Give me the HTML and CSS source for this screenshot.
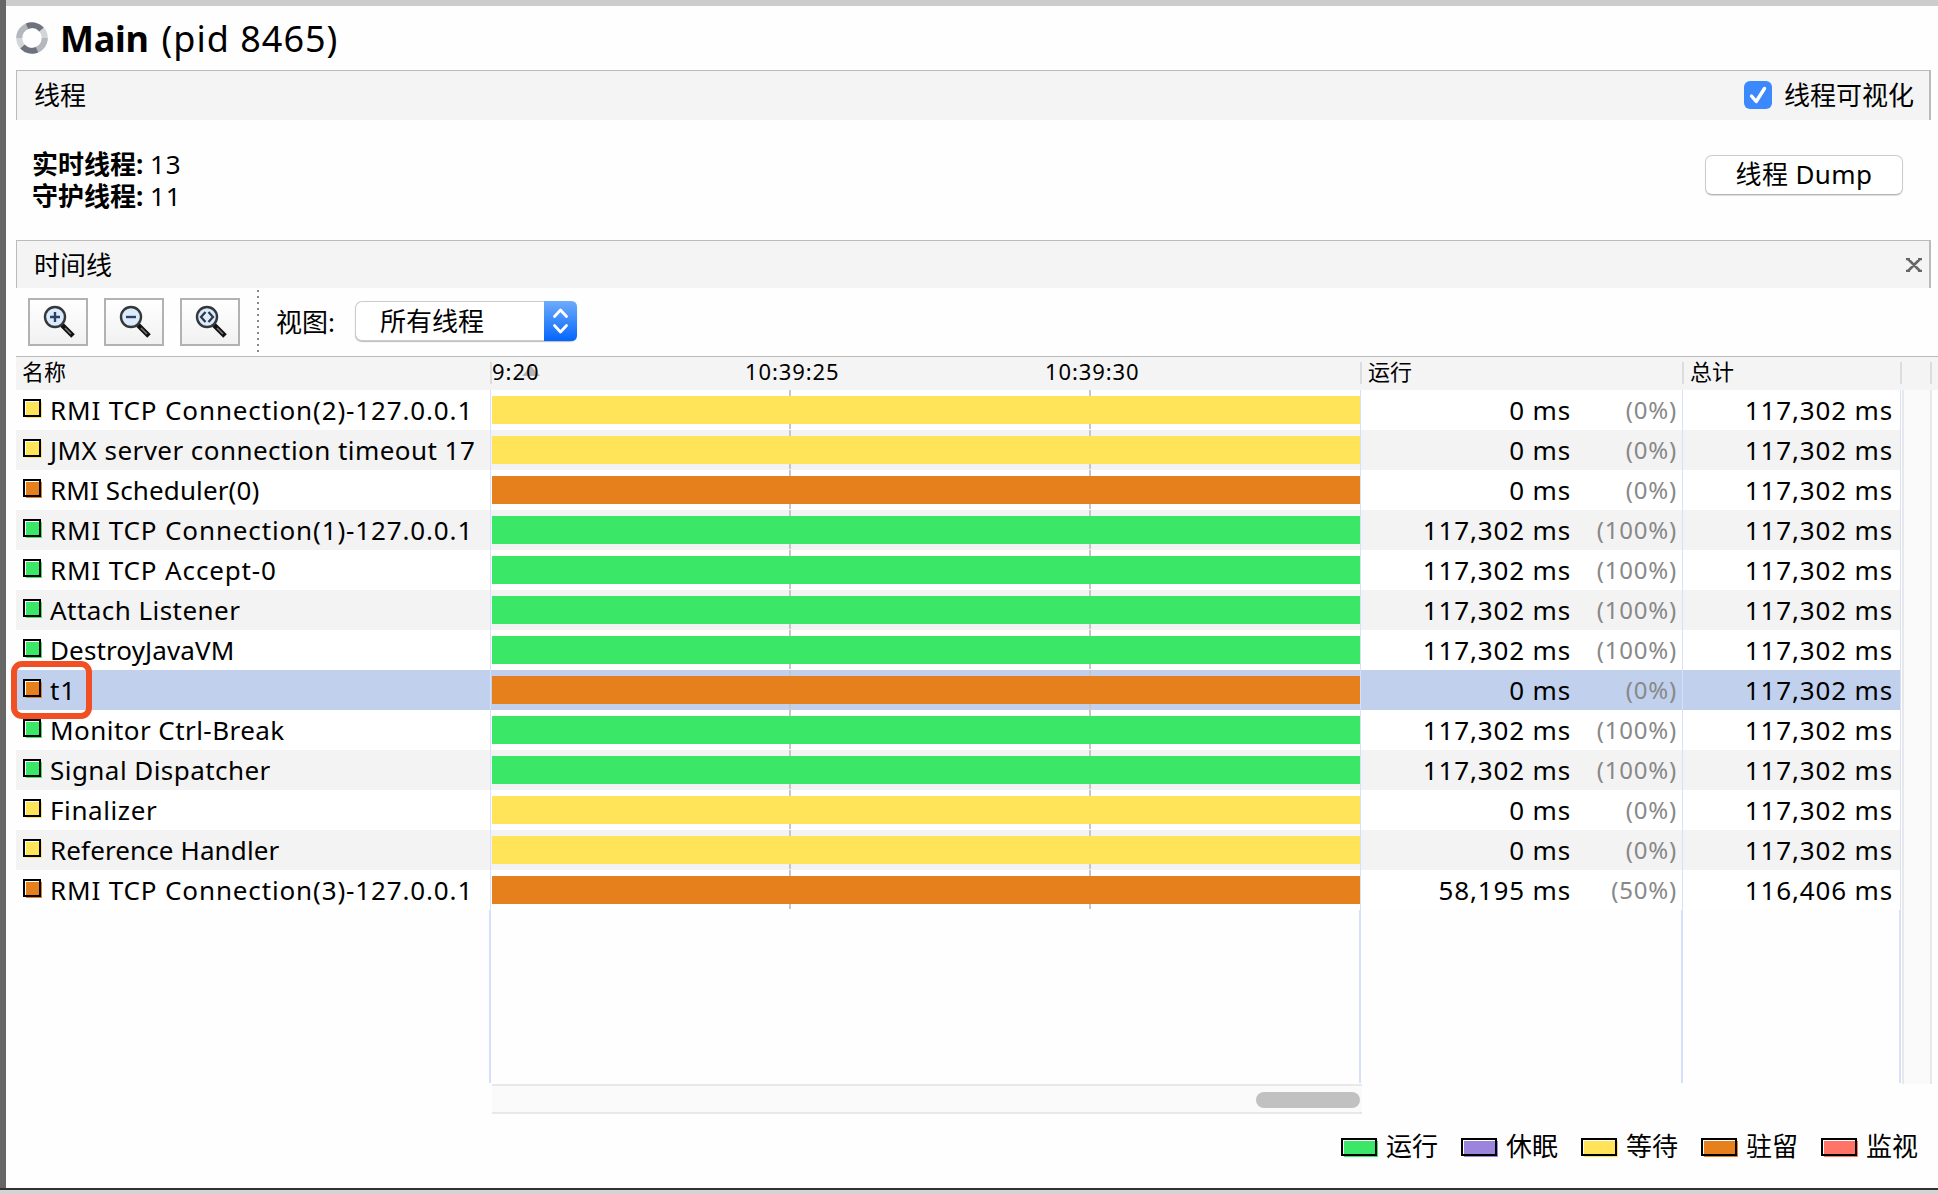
FILE: index.html
```html
<!DOCTYPE html>
<html lang="zh-CN">
<head>
<meta charset="utf-8">
<title>Main (pid 8465)</title>
<link rel="stylesheet" href="styles.css">
</head>
<body>
<div class="window">
  <header class="title">
    <svg class="spinner" width="32" height="32" viewBox="0 0 32 32" fill="none" stroke-width="6">
      <circle cx="16" cy="16" r="12.8" stroke="#d3d5d9"/>
      <path d="M3.200 16A12.800 12.800 0 0 1 12 4" stroke="#b4b7bd"/>
      <path d="M11 4.300A12.800 12.800 0 0 1 25.500 7.500" stroke="#6d727c"/>
      <path d="M28.800 16A12.800 12.800 0 0 1 20 28" stroke="#b4b7bd"/>
      <path d="M21 27.700A12.800 12.800 0 0 1 6.500 24.500" stroke="#6d727c"/>
    </svg>
    <h1><b>Main</b> <span class="pid">(pid 8465)</span></h1>
  </header>

  <section class="bar">
    <span>线程</span>
    <label class="visual">
      <svg width="28" height="28" viewBox="0 0 28 28"><rect width="28" height="28" rx="6" fill="#3b89fc"/><path d="M7.500 15L12.200 20.500L20.500 7.500" fill="none" stroke="#fff" stroke-width="3.400" stroke-linecap="round" stroke-linejoin="round"/></svg>
      <span>线程可视化</span>
    </label>
  </section>

  <section class="summary">
    <div class="stats">
      <div><b>实时线程:</b> <span>13</span></div>
      <div><b>守护线程:</b> <span>11</span></div>
    </div>
    <button class="dump">线程 Dump</button>
  </section>

  <section class="bar timeline">
    <span>时间线</span>
    <svg class="close" width="16" height="14" viewBox="0 0 16 14"><path d="M0 1H4M12 1H16M0 13H4M12 13H16M2 1L14 13M14 1L2 13" fill="none" stroke="#666" stroke-width="2.600"/></svg>
  </section>

  <nav class="toolbar">
    <button class="tool"><svg width="32" height="34" viewBox="0 0 32 34"><path d="M19 20L30 31" stroke="#111" stroke-width="5"/><path d="M22 23L28 29" stroke="#777" stroke-width="1.500"/><circle cx="12" cy="12" r="10" fill="#dcebfa" stroke="#33383d" stroke-width="2.400"/><path d="M7 12H17M12 7V17" stroke="#2d3f66" stroke-width="2.400"/></svg></button>
    <button class="tool"><svg width="32" height="34" viewBox="0 0 32 34"><path d="M19 20L30 31" stroke="#111" stroke-width="5"/><path d="M22 23L28 29" stroke="#777" stroke-width="1.500"/><circle cx="12" cy="12" r="10" fill="#dcebfa" stroke="#33383d" stroke-width="2.400"/><path d="M7 12H17" stroke="#2d3f66" stroke-width="2.400"/></svg></button>
    <button class="tool"><svg width="32" height="34" viewBox="0 0 32 34"><path d="M19 20L30 31" stroke="#111" stroke-width="5"/><path d="M22 23L28 29" stroke="#777" stroke-width="1.500"/><circle cx="12" cy="12" r="10" fill="#dcebfa" stroke="#33383d" stroke-width="2.400"/><path d="M10.500 7L6 12L10.500 17M13.500 7L18 12L13.500 17" fill="none" stroke="#2d3848" stroke-width="2.200"/></svg></button>
    <i class="divider"></i>
    <span class="view-label">视图:</span>
    <div class="select"><span>所有线程</span>
      <svg width="33" height="40" viewBox="0 0 33 40"><defs><linearGradient id="blue" x2="0" y2="1"><stop stop-color="#6eacfa"/><stop offset="1" stop-color="#0465fe"/></linearGradient></defs><path d="M0 0H27Q33 0 33 6V34Q33 40 27 40H0Z" fill="url(#blue)"/><path d="M10.500 15.500L16.500 9L22.500 15.500M10.500 24.500L16.500 31L22.500 24.500" fill="none" stroke="#fff" stroke-width="2.800" stroke-linecap="round" stroke-linejoin="round"/></svg>
    </div>
  </nav>

  <div class="thead">
    <span class="h-name">名称</span>
    <div class="h-time"><svg class="sort" width="18" height="10" viewBox="0 0 18 10"><path d="M0 10L9 0L18 10Z" fill="#b4b4b4"/></svg><span class="t0">9:20</span><span class="t1">10:39:25</span><span class="t2">10:39:30</span></div>
    <span class="h-run">运行</span>
    <span class="h-total">总计</span>
    <span class="h-end"></span>
  </div>

  <div class="content">
    <div class="rows">
      <div class="row wait"><div class="name wide"><i></i><span>RMI TCP Connection(2)-127.0.0.1</span></div><div class="chart"><i></i></div><div class="run"><span>0 ms</span><small>(0%)</small></div><div class="total">117,302 ms</div></div>
      <div class="row wait"><div class="name snug"><i></i><span>JMX server connection timeout 17</span></div><div class="chart"><i></i></div><div class="run"><span>0 ms</span><small>(0%)</small></div><div class="total">117,302 ms</div></div>
      <div class="row park"><div class="name tight"><i></i><span>RMI Scheduler(0)</span></div><div class="chart"><i></i></div><div class="run"><span>0 ms</span><small>(0%)</small></div><div class="total">117,302 ms</div></div>
      <div class="row live"><div class="name wide"><i></i><span>RMI TCP Connection(1)-127.0.0.1</span></div><div class="chart"><i></i></div><div class="run"><span>117,302 ms</span><small>(100%)</small></div><div class="total">117,302 ms</div></div>
      <div class="row live"><div class="name wide"><i></i><span>RMI TCP Accept-0</span></div><div class="chart"><i></i></div><div class="run"><span>117,302 ms</span><small>(100%)</small></div><div class="total">117,302 ms</div></div>
      <div class="row live"><div class="name snug"><i></i><span>Attach Listener</span></div><div class="chart"><i></i></div><div class="run"><span>117,302 ms</span><small>(100%)</small></div><div class="total">117,302 ms</div></div>
      <div class="row live"><div class="name tight"><i></i><span>DestroyJavaVM</span></div><div class="chart"><i></i></div><div class="run"><span>117,302 ms</span><small>(100%)</small></div><div class="total">117,302 ms</div></div>
      <div class="row park selected"><div class="name wide"><i></i><span>t1</span><b class="marker"></b></div><div class="chart"><i></i></div><div class="run"><span>0 ms</span><small>(0%)</small></div><div class="total">117,302 ms</div></div>
      <div class="row live"><div class="name snug"><i></i><span>Monitor Ctrl-Break</span></div><div class="chart"><i></i></div><div class="run"><span>117,302 ms</span><small>(100%)</small></div><div class="total">117,302 ms</div></div>
      <div class="row live"><div class="name snug"><i></i><span>Signal Dispatcher</span></div><div class="chart"><i></i></div><div class="run"><span>117,302 ms</span><small>(100%)</small></div><div class="total">117,302 ms</div></div>
      <div class="row wait"><div class="name"><i></i><span>Finalizer</span></div><div class="chart"><i></i></div><div class="run"><span>0 ms</span><small>(0%)</small></div><div class="total">117,302 ms</div></div>
      <div class="row wait"><div class="name tight"><i></i><span>Reference Handler</span></div><div class="chart"><i></i></div><div class="run"><span>0 ms</span><small>(0%)</small></div><div class="total">117,302 ms</div></div>
      <div class="row park"><div class="name wide"><i></i><span>RMI TCP Connection(3)-127.0.0.1</span></div><div class="chart"><i></i></div><div class="run"><span>58,195 ms</span><small>(50%)</small></div><div class="total">116,406 ms</div></div>
      <div class="blank"><i></i><i></i><i></i><i></i></div>
    </div>
    <div class="vscroll"></div>
  </div>
  <div class="hscroll"><i></i></div>

  <footer class="legend">
    <span class="live"><i></i>运行</span>
    <span class="sleep"><i></i>休眠</span>
    <span class="wait"><i></i>等待</span>
    <span class="park"><i></i>驻留</span>
    <span class="monitor"><i></i>监视</span>
  </footer>
</div>
<div class="bottom-edge"></div>
</body>
</html>
```
FILE: styles.css
```css
* { box-sizing: border-box; }
body {
  margin: 0;
  width: 1938px;
  height: 1194px;
  overflow: hidden;
  background: #fefefe;
  color: #000;
  font: 26px/32px "Noto Sans", "Noto Sans CJK SC", sans-serif;
  white-space: nowrap;
}
button { font: inherit; color: inherit; padding: 0; }
.window {
  height: 1188px;
  border-left: 6px solid #666;
  padding-left: 10px;
  background: linear-gradient(#ccc 6px, #fefefe 6px);
}
.bottom-edge { height: 6px; border-top: 2px solid #333; background: #d4d4d4; }

.title { height: 70px; display: flex; align-items: flex-start; padding-top: 22px; }
.title h1 { margin: -7px 0 0 12px; font-size: 36px; line-height: 48px; font-weight: 400; display: flex; gap: 13px; }
.title b { letter-spacing: -.3px; }
.pid { letter-spacing: 1px; }

.bar {
  width: 1915px;
  height: 50px;
  padding: 0 15px 2px 17px;
  border: 1px solid #bbb;
  border-right-width: 2px;
  border-bottom: 0;
  background: #f4f4f4;
  display: flex;
  justify-content: space-between;
  align-items: center;
}
.visual { display: flex; align-items: center; gap: 12px; padding-top: 1px; }
.timeline { height: 48px; padding: 0 7px 0 17px; }

.summary {
  width: 1915px;
  height: 120px;
  padding: 28px 28px 0 16px;
  display: flex;
  justify-content: space-between;
  align-items: flex-start;
}
.stats span { letter-spacing: .8px; }
.dump {
  width: 198px;
  height: 40px;
  margin-top: 7px;
  padding-bottom: 2px;
  border: 1px solid #ccc;
  border-bottom-color: #b5b5b5;
  border-radius: 7px;
  background: #fff;
  box-shadow: 0 1px 1px #ddd;
  letter-spacing: .4px;
}

.toolbar { height: 68px; padding: 2px 0 0 12px; display: flex; align-items: flex-start; }
.tool {
  width: 60px;
  height: 48px;
  margin: 8px 16px 0 0;
  padding-left: 2px;
  border: 2px solid #b2b2b2;
  background: linear-gradient(#fff, #f1f1f1);
  display: flex;
  align-items: center;
  justify-content: center;
}
.divider { width: 2px; height: 64px; margin-left: 1px; background: repeating-linear-gradient(#888 0 2px, transparent 2px 6px); }
.view-label { margin: 16px 20px 0 17px; }
.select {
  width: 222px;
  height: 40px;
  margin-top: 11px;
  border: 1px solid #ccc;
  border-right: 0;
  border-radius: 7px;
  box-shadow: 0 1px 1px #bbb;
  background: #fff;
  display: flex;
  align-items: center;
  justify-content: space-between;
  padding-left: 24px;
}
.select span { padding-bottom: 1px; }

.thead {
  width: 1922px;
  height: 34px;
  border-top: 1px solid #bbb;
  background: #f4f4f4;
  font-size: 22px;
  line-height: 29px;
  display: grid;
  grid-template-columns: 474px 870px 322px 218px 30px 1fr;
}
.thead > span, .h-time { position: relative; }
.h-name { padding-left: 6px; }
.h-run, .h-total { padding-left: 8px; }
.h-time::before, .h-run::before, .h-total::before, .h-end::before, .h-end::after {
  content: "";
  position: absolute;
  left: 0;
  top: 5px;
  width: 2px;
  height: 22px;
  background: #dcdcdc;
}
.h-end::after { left: 30px; }
.h-time span, .sort { position: absolute; top: 0; letter-spacing: .9px; }
.h-time .t0 { left: 2px; letter-spacing: 1px; }
.h-time .t1 { left: 255px; }
.h-time .t2 { left: 555px; }
.h-time .sort { left: 32px; top: 9px; }

.content { display: flex; height: 694px; }
.rows { width: 1886px; height: 694px; }
.row { width: 1885px; height: 40px; display: grid; grid-template-columns: 474px 870px 322px 1fr; background: #fff; line-height: 40px; }
.row:nth-child(even) { background: #f3f3f3; }
.row.selected { background: #c1d1ed; }
.name { position: relative; display: flex; padding-left: 7px; letter-spacing: .6px; }
.name.wide { letter-spacing: .86px; }
.name.snug { letter-spacing: .45px; }
.name.tight { letter-spacing: .12px; }
.name > i { width: 18px; height: 18px; margin: 9px 9px 0 0; }
.name > i, .legend i { border: 2px solid #000; position: relative; background: #fff; }
.name > i::before, .legend i::before { content: ""; position: absolute; inset: 1px -3px -3px 1px; background: var(--c); }
.name > i::after, .legend i::after { content: ""; position: absolute; inset: -2px; border: 2px solid #000; }
.chart { border-left: 1px solid #d6e0fa; padding: 6px 0 0 1px; background: linear-gradient(#c6c6c6, #c6c6c6) 298px 0 / 2px 39px no-repeat, linear-gradient(#c6c6c6, #c6c6c6) 598px 0 / 2px 39px no-repeat; }
.chart i { display: block; height: 28px; background: var(--c); }
.run { border-left: 1px solid #d6e0fa; display: grid; grid-template-columns: 210px 1fr; padding-right: 5px; text-align: right; letter-spacing: .85px; }
.run small { font-size: 24px; color: #888; letter-spacing: .8px; }
.total { border: solid #d6e0fa; border-width: 0 1px; padding-right: 7px; text-align: right; letter-spacing: .85px; }
.live { --c: #3be766; }
.wait { --c: #ffe45a; }
.park { --c: #e6801d; }
.sleep { --c: #9a84dc; }
.monitor { --c: #ff7466; }
.marker { position: absolute; z-index: 2; left: -5px; top: -9px; width: 81px; height: 58px; border: 6px solid #f05023; border-radius: 11px; }
.blank { height: 173px; display: grid; grid-template-columns: 475px 870px 322px 218px; }
.blank i { border-right: 2px solid #d6e0fa; }
.vscroll { width: 30px; background: #fafafa; border: solid #e8e8e8; border-width: 0 2px; }
.hscroll { width: 870px; height: 30px; margin-left: 476px; padding: 6px 2px 0 0; border: solid #e8e8e8; border-width: 2px 0; background: #fafafa; }
.hscroll i { display: block; width: 104px; height: 16px; margin-left: auto; border-radius: 8px; background: #c1c1c1; }
.legend { width: 1922px; padding: 16px 21px 0 0; display: flex; justify-content: flex-end; gap: 24px; }
.legend span { display: flex; align-items: center; width: 96px; }
.legend i { width: 36px; height: 18px; margin: 1px 9px 0 0; flex: none; }
```
